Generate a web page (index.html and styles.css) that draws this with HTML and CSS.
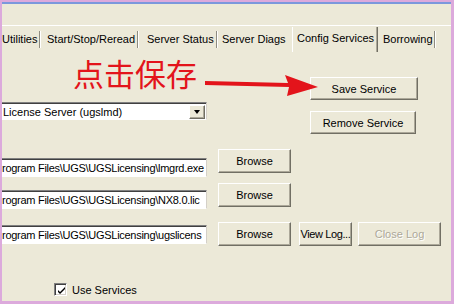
FILE: index.html
```
<!DOCTYPE html>
<html lang="zh">
<head>
<meta charset="utf-8">
<title>LMTOOLS - Config Services</title>
<link rel="stylesheet" href="styles.css">
</head>
<body>
<div class="frame">
  <div class="topgap"></div>
  <div class="tabs">
    <div class="tab t1">Utilities</div><span class="sep"></span>
    <div class="tab t2">Start/Stop/Reread</div><span class="sep"></span>
    <div class="tab t3">Server Status</div><span class="sep"></span>
    <div class="tab t4">Server Diags</div>
    <div class="tab active">Config Services</div>
    <div class="tab t6">Borrowing</div><span class="sep"></span>
  </div>
  <div class="panel">
    <div class="svc">
      <div class="svc-left">
        <div class="combo">
          <span class="combo-text">License Server (ugslmd)</span>
          <span class="combo-btn"><span class="tri"></span></span>
        </div>
      </div>
      <div class="svc-right">
        <button class="btn save">Save Service</button>
        <button class="btn remove">Remove Service</button>
      </div>
    </div>

    <div class="path-row r1">
      <div class="field f1"><span class="field-text">rogram Files\UGS\UGSLicensing\lmgrd.exe</span></div>
      <button class="btn browse">Browse</button>
    </div>
    <div class="path-row r2">
      <div class="field f2"><span class="field-text">rogram Files\UGS\UGSLicensing\NX8.0.lic</span></div>
      <button class="btn browse">Browse</button>
    </div>
    <div class="path-row r3">
      <div class="field f3"><span class="field-text">rogram Files\UGS\UGSLicensing\ugslicens</span></div>
      <button class="btn browse">Browse</button>
      <button class="btn viewlog">View Log...</button>
      <button class="btn closelog" disabled>Close Log</button>
    </div>

    <div class="check-row">
      <span class="box"><svg width="9" height="9" viewBox="0 0 9 9"><path d="M1 4 L3 6 L8 1 L8 3 L3 8 L1 6 Z" fill="#000"/></svg></span>
      <span class="check-label">Use Services</span>
    </div>

    <div class="note">点击保存</div>
    <svg class="arrow" width="125" height="30" viewBox="0 0 125 30">
      <polygon points="5,9 88,11 85,3 118,15 87,24 89,15 5,13" fill="#e3141b"/>
    </svg>
  </div>
</div>
</body>
</html>
```
FILE: styles.css
```
* { box-sizing: border-box; }
html, body { margin: 0; padding: 0; }
body {
  width: 454px;
  height: 304px;
  overflow: hidden;
  background: #dcaadc;
  font-family: "Liberation Sans", Arial, sans-serif;
  font-size: 11px;
  color: #000;
}
.frame {
  margin: 2px 3px 3px 2px;
  width: 449px;
  height: 299px;
  background: #ece9d8;
  border-top: 2px solid #7b98dc;
  overflow: hidden;
  display: flex;
  flex-direction: column;
}
.topgap { height: 21px; flex: none; }
.tabs {
  flex: none;
  height: 27px;
  border-top: 1px solid #fff;
  display: flex;
  align-items: center;
}
.tab {
  height: 26px;
  line-height: 27px;
  white-space: nowrap;
  flex: none;
}
.t1 { width: 37px; padding-left: 0; }
.t2 { width: 96px; padding-left: 6px; }
.t3 { width: 77px; padding-left: 8px; }
.t4 { width: 74px; padding-left: 4px; }
.t6 { width: 56px; padding-left: 5px; }
.tab.active {
  width: 86px;
  padding-left: 4px;
  line-height: 22px;
  align-self: flex-end;
  height: 25px;
  border-left: 1px solid #fff;
  border-right: 1px solid #716f64;
  box-shadow: inset -1px 0 0 #aca899;
}
.sep {
  flex: none;
  width: 2px;
  height: 17px;
  border-left: 1px solid #8e8c80;
  border-right: 1px solid #fff;
}
.panel {
  position: relative;
  flex: 1;
  display: flex;
  flex-direction: column;
}
.btn {
  font-family: "Liberation Sans", Arial, sans-serif;
  font-size: 11px;
  color: #000;
  background: #ece9d8;
  border-style: solid;
  border-width: 1px;
  border-color: #fff #716f64 #716f64 #fff;
  box-shadow: inset -1px -1px 0 #aca899;
  padding: 0;
  margin: 0;
  flex: none;
  white-space: nowrap;
}
.svc { display: flex; height: 82px; flex: none; }
.svc-left { width: 205px; padding-top: 50px; }
.combo {
  height: 18px;
  background: #fff;
  border-top: 1px solid #808080;
  border-bottom: 1px solid #fff;
  border-right: 1px solid #d4d0c8;
  box-shadow: inset 0 1px 0 #404040;
  display: flex;
  align-items: center;
  padding: 1px 1px 0 1px;
}
.combo-text { flex: 1; padding-left: 0; white-space: nowrap; }
.combo-btn {
  width: 16px;
  height: 14px;
  background: #ece9d8;
  border-style: solid;
  border-width: 1px;
  border-color: #fff #716f64 #716f64 #fff;
  box-shadow: inset -1px -1px 0 #aca899;
  display: flex;
  align-items: center;
  justify-content: center;
}
.tri {
  width: 0; height: 0;
  border-left: 3.5px solid transparent;
  border-right: 3.5px solid transparent;
  border-top: 4px solid #000;
  margin-right: 1px;
}
.svc-right {
  margin-left: 103px;
  padding-top: 25px;
  display: flex;
  flex-direction: column;
  align-items: flex-start;
}
.save { width: 108px; height: 23px; }
.remove { width: 106px; height: 23px; margin-top: 11px; }

.path-row { display: flex; align-items: flex-start; height: 24px; flex: none; }
.r1 { margin-top: 15px; }
.r2 { margin-top: 10px; }
.r3 { margin-top: 15px; }
.field {
  width: 205px;
  height: 19px;
  background: #fff;
  border-top: 1px solid #808080;
  border-bottom: 1px solid #fff;
  border-right: 1px solid #d4d0c8;
  box-shadow: inset 0 1px 0 #404040;
  overflow: hidden;
  white-space: nowrap;
  line-height: 18px;
  letter-spacing: -0.28px;
  padding-left: 0;
  flex: none;
}
.f1 { margin-top: 9px; }
.f2 { margin-top: 7px; }
.f3 { margin-top: 3px; }
.browse { width: 73px; height: 24px; margin-left: 11px; }
.viewlog { width: 53px; height: 24px; margin-left: 8px; letter-spacing: -0.4px; }
.closelog {
  width: 83px; height: 24px; margin-left: 6px;
  color: #aca899;
  text-shadow: 1px 1px 0 #fff;
}
.check-row {
  margin-top: 37px;
  margin-left: 52px;
  display: flex;
  align-items: center;
  height: 13px;
  flex: none;
}
.box {
  width: 13px;
  height: 13px;
  background: #fff;
  border-style: solid;
  border-width: 1px;
  border-color: #808080 #fff #fff #808080;
  box-shadow: inset 1px 1px 0 #404040, inset -1px -1px 0 #d4d0c8;
  display: flex;
  align-items: center;
  justify-content: center;
  flex: none;
}
.box svg { display: block; margin: 1px 0 0 1px; }
.check-label { margin-left: 5px; }
.note {
  position: absolute;
  left: 71px;
  top: 3px;
  font-family: "Noto Sans CJK SC", sans-serif;
  font-size: 31px;
  line-height: 36px;
  color: #e3141b;
  white-space: nowrap;
}
.arrow {
  position: absolute;
  left: 198px;
  top: 20px;
}
```
